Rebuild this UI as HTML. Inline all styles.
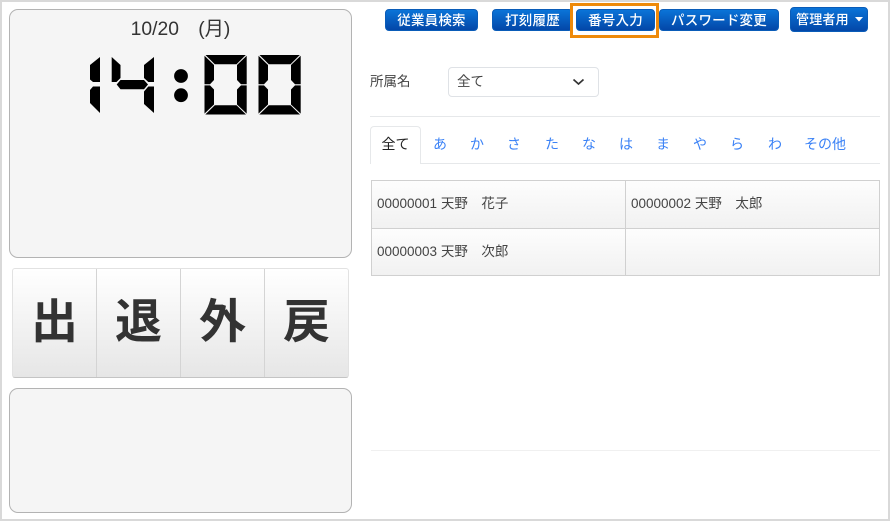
<!DOCTYPE html>
<html lang="ja">
<head>
<meta charset="utf-8">
<title>打刻</title>
<style>
html,body{margin:0;padding:0;background:#fff}
body{width:890px;height:521px;position:relative;overflow:hidden;font-family:"Liberation Sans","Noto Sans CJK JP",sans-serif;color:#333}
#w{position:absolute;left:0;top:0;width:890px;height:521px;filter:blur(.3px)}
.a{position:absolute;box-sizing:border-box}
.frame{left:0;top:0;width:890px;height:521px;border:2px solid #d9d9d9;pointer-events:none}
.panel{left:9px;width:343px;background:#f5f5f5;border:1px solid #b3b3b3;border-radius:9px}
.date{left:9px;top:19px;width:343px;text-align:center;font-size:19.3px;line-height:22px;color:#333;white-space:pre}
.btns{left:12px;top:268px;width:337px;height:110px;border:1px solid #e2e2e2;border-bottom-color:#c4c4c4;border-radius:3px;display:flex;overflow:hidden;background:linear-gradient(#ffffff,#e6e6e6)}
.btns div{flex:1;text-align:center;font-size:47px;font-weight:700;line-height:106px;color:#333;border-left:1px solid #d4d4d4}
.btns div:first-child{border-left:0}
.b{top:9px;height:22px;border-radius:4px;background:linear-gradient(#0a74d8,#0347a8);border:1px solid #0a5cb8;color:#fff;font-size:13.5px;line-height:21px;text-align:center;white-space:nowrap;letter-spacing:.2px;font-weight:500}
.orange{left:570px;top:3px;width:89px;height:35px;border:3px solid #ee8a0a}
.lbl{left:370px;top:72px;font-size:13.5px;line-height:20px;color:#444}
.sel{left:448px;top:67px;width:151px;height:30px;border:1px solid #dfe2e6;border-radius:4px;background:#fff;font-size:13.5px;line-height:28px;padding-left:8px;color:#444}
.hr{height:1px;background:#e6e8ea}
.tab{top:136px;font-size:14px;line-height:16px;color:#3b82f6;text-align:center;width:40px}
.active{left:370px;top:126px;width:51px;height:38px;background:#fff;border:1px solid #e6e8ea;border-bottom:0;border-radius:4px 4px 0 0;color:#222;font-size:14px;line-height:35px;text-align:center}
.tbl{left:371px;top:180px;width:509px;height:96px;border:1px solid #d0d0d0;background:#f5f5f5}
.cell{width:254px;height:48px;font-size:13.5px;line-height:45px;padding-left:5px;color:#444;background:linear-gradient(#fdfdfd,#f1f1f1);white-space:pre}
</style>
</head>
<body>
<div id="w">
<div class="a panel" style="top:9px;height:249px"></div>
<div class="a date">10/20　(月)</div>
<svg class="a" style="left:0;top:0" width="352" height="125" viewBox="0 0 352 125" fill="#000">
<polygon points="100,57 100,82 93,82 90,79.5 90,65"/>
<polygon points="100,86.5 100,113 90,103 90,90 93,86.5"/>
<polygon points="111.7,57 120.5,65 120.5,78 116.5,82 111.7,82"/>
<polygon points="116.7,84.5 120.5,80 144,80 148,84.5 144,89.3 120.5,89.3"/>
<polygon points="154,57 154,82 148.3,82 144,78 144,65"/>
<polygon points="154,86.5 154,113 144,104 144,91.5 148.3,86.5"/>
<circle cx="181" cy="76" r="6.9"/>
<circle cx="181" cy="95.2" r="6.9"/>
<g>
<polygon points="205.5,55 245.8,55 236.5,64.3 214.8,64.3"/>
<polygon points="204.5,55.8 214,65 214,80 210,84.2 204.5,84.2"/>
<polygon points="204.5,85.4 210,85.4 214,89.5 214,104.5 204.5,113.6"/>
<polygon points="205.3,114.5 214.8,105.2 236.5,105.2 246,114.5"/>
<polygon points="246.7,55.8 246.7,84.2 241,84.2 237,80 237,65"/>
<polygon points="246.7,85.4 246.7,113.6 237,104.5 237,89.5 241,85.4"/>
</g>
<g transform="translate(54,0)">
<polygon points="205.5,55 245.8,55 236.5,64.3 214.8,64.3"/>
<polygon points="204.5,55.8 214,65 214,80 210,84.2 204.5,84.2"/>
<polygon points="204.5,85.4 210,85.4 214,89.5 214,104.5 204.5,113.6"/>
<polygon points="205.3,114.5 214.8,105.2 236.5,105.2 246,114.5"/>
<polygon points="246.7,55.8 246.7,84.2 241,84.2 237,80 237,65"/>
<polygon points="246.7,85.4 246.7,113.6 237,104.5 237,89.5 241,85.4"/>
</g>
</svg>
<div class="a btns"><div>出</div><div>退</div><div>外</div><div>戻</div></div>
<div class="a panel" style="top:388px;height:125px"></div>

<div class="a b" style="left:385px;width:93px">従業員検索</div>
<div class="a b" style="left:492px;width:81px">打刻履歴</div>
<div class="a b" style="left:576px;width:79px">番号入力</div>
<div class="a b" style="left:659px;width:120px">パスワード変更</div>
<div class="a b" style="left:790px;top:7px;width:78px;height:25px;line-height:23px;text-align:left;padding-left:5px;font-size:13px">管理者用</div>
<svg class="a" style="left:855px;top:17px" width="8" height="5"><polygon points="0,0 8,0 4,4.5" fill="#fff"/></svg>
<div class="a orange"></div>

<div class="a lbl">所属名</div>
<div class="a sel">全て</div>
<svg class="a" style="left:572px;top:78px" width="13" height="8" viewBox="0 0 13 8"><path d="M1.5 1.5 L6.5 6 L11.5 1.5" fill="none" stroke="#333" stroke-width="1.7"/></svg>

<div class="a hr" style="left:370px;top:116px;width:510px"></div>
<div class="a hr" style="left:370px;top:163px;width:510px"></div>
<div class="a active">全て</div>
<div class="a tab" style="left:420px">あ</div>
<div class="a tab" style="left:457px">か</div>
<div class="a tab" style="left:494px">さ</div>
<div class="a tab" style="left:532px">た</div>
<div class="a tab" style="left:569px">な</div>
<div class="a tab" style="left:606px">は</div>
<div class="a tab" style="left:643px">ま</div>
<div class="a tab" style="left:680px">や</div>
<div class="a tab" style="left:717px">ら</div>
<div class="a tab" style="left:755px">わ</div>
<div class="a tab" style="left:795px;width:60px">その他</div>

<div class="a tbl"></div>
<div class="a cell" style="left:372px;top:181px;height:47px">00000001 天野　花子</div>
<div class="a cell" style="left:626px;top:181px;height:47px;width:253px">00000002 天野　太郎</div>
<div class="a cell" style="left:372px;top:229px;height:46px">00000003 天野　次郎</div>
<div class="a cell" style="left:626px;top:229px;height:46px;width:253px"></div>
<div class="a" style="left:371px;top:228px;width:509px;height:1px;background:#d0d0d0"></div>
<div class="a" style="left:625px;top:180px;width:1px;height:96px;background:#d0d0d0"></div>

<div class="a hr" style="left:371px;top:450px;width:509px;background:#f0f0f0"></div>
<div class="a frame"></div>
</div>
</body>
</html>
